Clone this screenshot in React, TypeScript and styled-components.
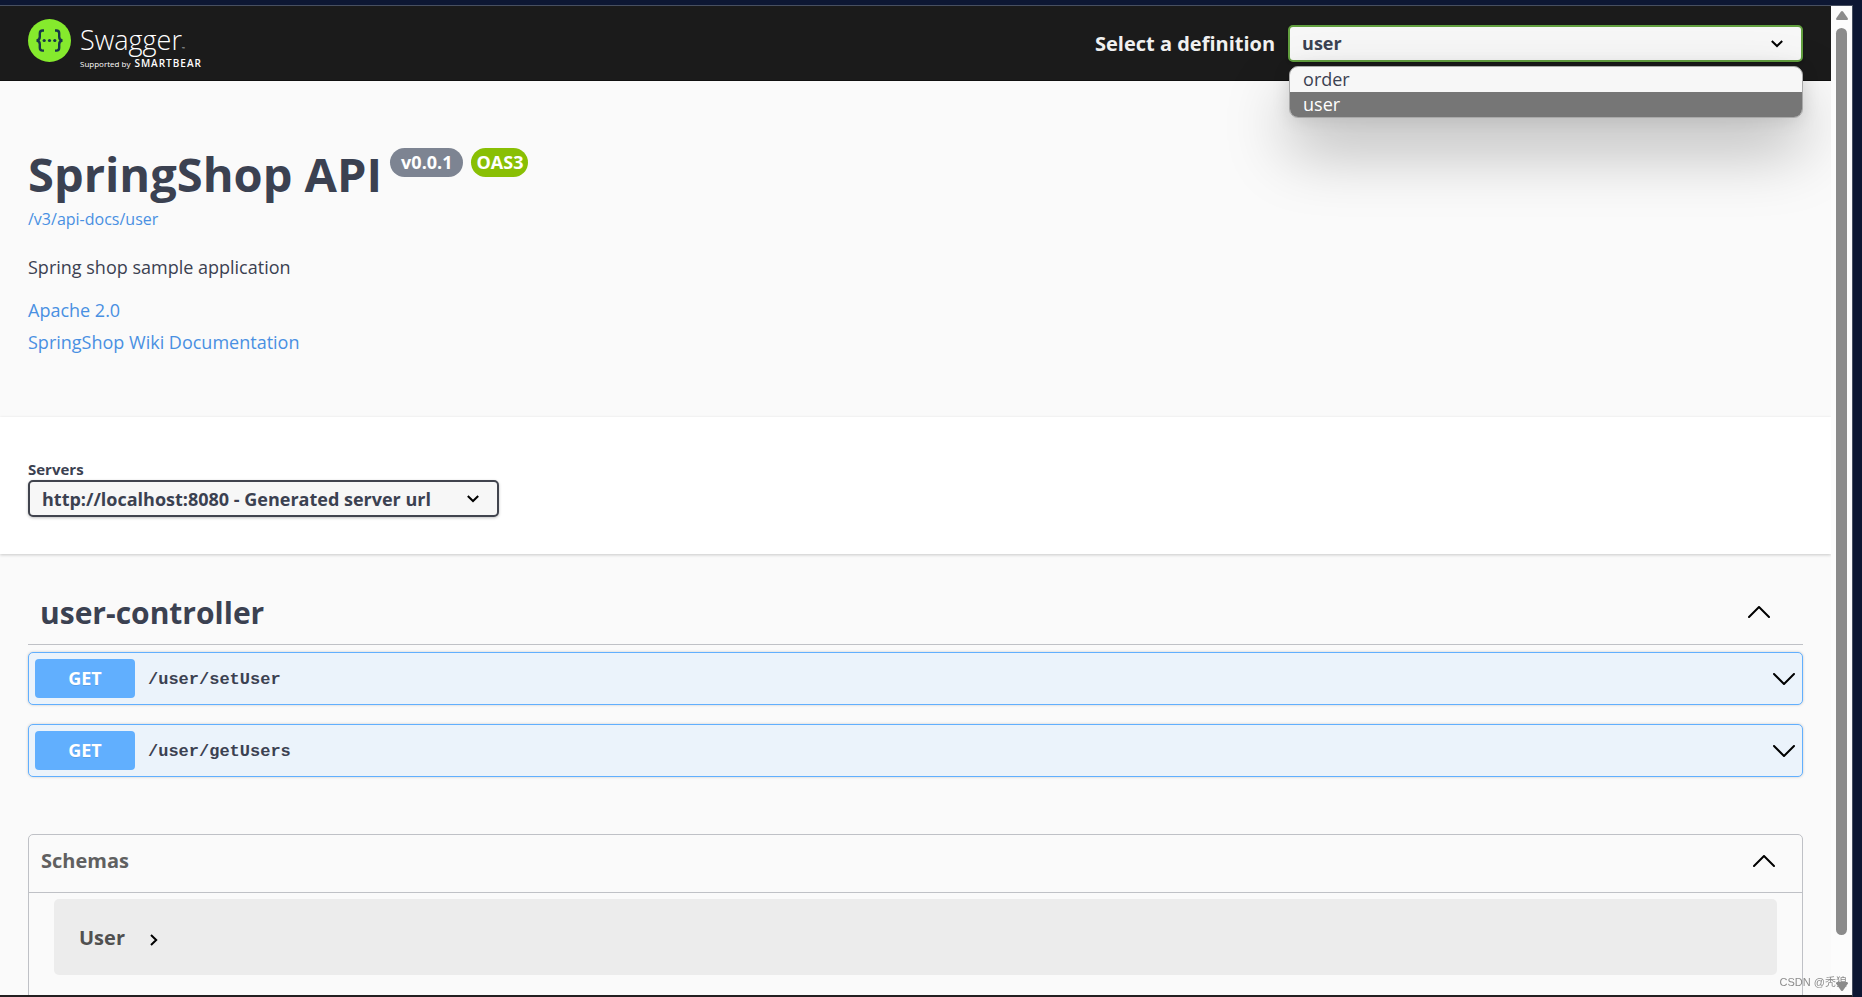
import React from "react";
import styled, { createGlobalStyle } from "styled-components";

const GlobalStyle = createGlobalStyle`
  *, *::before, *::after { box-sizing: border-box; }
  body {
    margin: 0;
    background: #0d1733;
    color: #3b4151;
    font-family: "Open Sans", "Noto Sans", "Noto Sans CJK SC", sans-serif;
    font-size: 18px;
  }
  h1, h2, h3, p, ul { margin: 0; padding: 0; }
  button, select { font: inherit; color: inherit; }
`;

const Desktop = styled.div`
  height: 100vh;
  padding: 5px 9px 0 0;
  background: #0d1733;
`;

const BrowserWindow = styled.div`
  display: flex;
  height: 100%;
  background: #fafafa;
  border: solid #474f60;
  border-width: 1px 1px 0 0;
  border-bottom: 2px solid #231f20;
`;

const Page = styled.div`
  flex: 1;
  min-width: 0;
  overflow: hidden;
`;

const TopBar = styled.header`
  display: flex;
  align-items: center;
  justify-content: space-between;
  height: 75px;
  padding: 0 28px;
  background: #1b1b1b;
  border-bottom: 1px solid #101010;
`;

const Brand = styled.a`
  display: flex;
  gap: 9px;
  height: 48px;
  color: #fff;
  text-decoration: none;
`;

const BrandText = styled.span`
  display: flex;
  flex-direction: column;
  padding-top: 5px;
`;

const BrandName = styled.span`
  font-size: 27px;
  font-weight: 300;
  line-height: 32px;

  small {
    font-size: 4px;
    line-height: 1;
  }
`;

const BrandSupport = styled.span`
  display: flex;
  align-items: baseline;
  gap: 4px;
  font-size: 8px;
  line-height: 14px;

  b {
    font-size: 10px;
    font-weight: 600;
    letter-spacing: 1px;
  }
`;

const DefinitionForm = styled.form`
  display: flex;
  align-items: center;
  gap: 13px;
  flex: 0 1 708px;
`;

const DefinitionLabel = styled.label`
  flex: none;
  color: #f0f0f0;
  font-size: 20px;
  font-weight: 700;
`;

const SelectBox = styled.div<{ $grow?: boolean }>`
  position: relative;
  flex: ${(p) => (p.$grow ? "1" : "none")};
  width: ${(p) => (p.$grow ? "auto" : "471px")};

  > svg {
    position: absolute;
    top: 15px;
    right: 20px;
    pointer-events: none;
  }
`;

const Select = styled.select<{ $active?: boolean }>`
  display: block;
  width: 100%;
  height: 37px;
  padding: 0 40px 0 12px;
  appearance: none;
  background: #f7f7f7;
  border: 2px solid ${(p) => (p.$active ? "#62a03f" : "#41444e")};
  border-radius: 5px;
  box-shadow: 0 1px 3px rgba(0, 0, 0, 0.25);
  font-size: 18px;
  font-weight: 700;
  outline: none;
`;

const OptionList = styled.ul`
  position: absolute;
  z-index: 2;
  top: 41px;
  left: 1px;
  right: 0;
  overflow: hidden;
  background: #f7f7f7;
  border: 1px solid #a9a9a9;
  border-radius: 9px;
  box-shadow: 0 32px 64px rgba(0, 0, 0, 0.28), 0 2px 18px rgba(0, 0, 0, 0.12);
  list-style: none;
`;

const Option = styled.li<{ $selected?: boolean }>`
  padding: 0 13px;
  line-height: 25px;
  color: ${(p) => (p.$selected ? "#fff" : "#3b4151")};
  background: ${(p) => (p.$selected ? "#767676" : "transparent")};
`;

const Info = styled.section`
  padding: 65px 28px 59px;
`;

const TitleRow = styled.div`
  display: flex;
  align-items: flex-start;
  gap: 8px;
`;

const Title = styled.h1`
  font-size: 47px;
  line-height: 56px;
`;

const Badge = styled.span<{ $color: string; $pad: number }>`
  margin-top: 2px;
  padding: 0 ${(p) => p.$pad}px;
  border-radius: 15px;
  background: ${(p) => p.$color};
  color: #fff;
  font-size: 18px;
  font-weight: 700;
  line-height: 29px;
`;

const Link = styled.a<{ $small?: boolean }>`
  display: block;
  width: fit-content;
  margin-top: ${(p) => (p.$small ? "5px" : "0")};
  color: #4990e2;
  font-size: ${(p) => (p.$small ? "16px" : "18px")};
  line-height: ${(p) => (p.$small ? "24px" : "32px")};
  text-decoration: none;
`;

const Description = styled.p`
  margin: 22px 0 13px;
  line-height: 28px;
`;

const Servers = styled.section`
  padding: 42px 28px 37px;
  background: #fff;
  box-shadow: 0 1px 3px rgba(0, 0, 0, 0.2);

  > label {
    display: block;
    font-size: 15px;
    font-weight: 700;
    line-height: 21px;
  }
`;

const Controller = styled.section`
  padding: 28px 28px 57px;
`;

const TagHeader = styled.div`
  display: flex;
  align-items: center;
  justify-content: space-between;
  height: 63px;
  margin-bottom: 7px;
  padding: 0 33px 2px 12px;
  border-bottom: 1px solid #bfc1c6;

  h2 {
    font-size: 30px;
  }
`;

const IconButton = styled.button`
  display: flex;
  padding: 0;
  border: 0;
  background: none;
`;

const Operations = styled.div`
  display: flex;
  flex-direction: column;
  gap: 19px;
`;

const Operation = styled.button`
  display: flex;
  align-items: center;
  gap: 13px;
  width: 100%;
  height: 53px;
  padding: 0 7px 0 6px;
  border: 1px solid #61affe;
  border-radius: 5px;
  background: #ebf3fb;
  box-shadow: 0 0 3px rgba(0, 0, 0, 0.19);
  text-align: left;

  > svg {
    margin-left: auto;
  }
`;

const Method = styled.span`
  width: 100px;
  border-radius: 4px;
  background: #61affe;
  color: #fff;
  font-size: 18px;
  font-weight: 700;
  line-height: 39px;
  text-align: center;
  text-shadow: 0 1px 0 rgba(0, 0, 0, 0.1);
`;

const Path = styled.span`
  padding-top: 2px;
  font-family: "Liberation Mono", monospace;
  font-size: 17px;
  font-weight: 700;
`;

const Schemas = styled.section`
  height: 240px;
  margin: 0 28px;
  border: 1px solid #bfc1c6;
  border-radius: 5px;
`;

const SchemasHeader = styled.div`
  display: flex;
  align-items: center;
  justify-content: space-between;
  height: 58px;
  padding: 0 27px 6px 12px;
  border-bottom: 1px solid #bfc1c6;
  color: #606060;

  h3 {
    font-size: 20px;
  }
`;

const Model = styled.button`
  display: flex;
  align-items: center;
  gap: 25px;
  width: calc(100% - 50px);
  height: 76px;
  margin: 6px 25px;
  padding: 0 25px;
  border: 0;
  border-radius: 5px;
  background: #ececec;
  color: #505050;
  font-size: 20px;
  font-weight: 700;

  > svg {
    margin-top: 5px;
  }
`;

const ScrollTrack = styled.div`
  display: flex;
  flex: none;
  flex-direction: column;
  align-items: center;
  justify-content: space-between;
  width: 21px;
  padding: 5px 0 4px;
  background: #fcfcfc;
`;

const ScrollThumb = styled.div`
  flex: 1;
  width: 11px;
  margin: 8px 0 47px;
  border-radius: 6px;
  background: #8b8b8b;
`;

const Watermark = styled.div`
  position: fixed;
  right: 15px;
  bottom: 6px;
  color: #8c8c8c;
  font-family: "Liberation Sans", "Noto Sans CJK SC", sans-serif;
  font-size: 11px;
  line-height: 18px;
`;

const SwaggerMark = () => (
  <svg width="43" height="43" viewBox="0 0 43 43" aria-hidden="true">
    <circle cx="21.5" cy="21.5" r="21.5" fill="#85ea2d" />
    <g fill="none" stroke="#173647" strokeWidth="2.4">
      <path d="M16 11.5h-1.4c-2 0-2.8 1-2.8 2.8v3.4c0 2.3-.9 3.5-3.2 3.8c2.3.3 3.2 1.5 3.2 3.8v3.4c0 1.9.8 2.9 2.8 2.9H16" />
      <path d="M27 11.5h1.4c2 0 2.8 1 2.8 2.8v3.4c0 2.3.9 3.5 3.2 3.8c-2.3.3-3.2 1.5-3.2 3.8v3.4c0 1.9-.8 2.9-2.8 2.9H27" />
    </g>
    <g fill="#173647">
      <circle cx="16.2" cy="21.5" r="1.6" />
      <circle cx="21.5" cy="21.5" r="1.6" />
      <circle cx="26.8" cy="21.5" r="1.6" />
    </g>
  </svg>
);

const SelectArrow = () => (
  <svg width="12" height="8" viewBox="0 0 12 8" fill="none" stroke="#000" strokeWidth="2" aria-hidden="true">
    <path d="M.8 1L6 6L11.2 1" />
  </svg>
);

const Chevron = ({ up = false }: { up?: boolean }) => (
  <svg width="22" height="12" viewBox="0 0 22 12" fill="none" stroke="#000" strokeWidth="2" strokeLinecap="round" strokeLinejoin="round" aria-hidden="true">
    <path d={up ? "M1 11L11 1L21 11" : "M1 1L11 11L21 1"} />
  </svg>
);

const ModelArrow = () => (
  <svg width="8" height="12" viewBox="0 0 8 12" fill="none" stroke="#000" strokeWidth="2" aria-hidden="true">
    <path d="M1 1L6.2 6L1 11" />
  </svg>
);

const ScrollArrow = ({ down = false }: { down?: boolean }) => (
  <svg width="12" height="9" viewBox="0 0 12 9" fill="#8b8b8b" aria-hidden="true">
    <path d={down ? "M0 1.5Q0 0 1 0H11Q12 0 12 1.5L7 8.5Q6 9.5 5 8.5Z" : "M0 7.5L5 .5Q6-.5 7 .5L12 7.5Q12 9 11 9H1Q0 9 0 7.5Z"} />
  </svg>
);

const definitions = ["order", "user"];
const operations = ["/user/setUser", "/user/getUsers"];

export default function App() {
  const [definition, setDefinition] = React.useState("user");

  return (
    <>
      <GlobalStyle />
      <Desktop>
        <BrowserWindow>
          <Page>
            <TopBar>
              <Brand href="#">
                <SwaggerMark />
                <BrandText>
                  <BrandName>
                    Swagger<small>™</small>
                  </BrandName>
                  <BrandSupport>
                    Supported by <b>SMARTBEAR</b>
                  </BrandSupport>
                </BrandText>
              </Brand>
              <DefinitionForm>
                <DefinitionLabel htmlFor="definition">Select a definition</DefinitionLabel>
                <SelectBox $grow>
                  <Select
                    id="definition"
                    $active
                    value={definition}
                    onChange={(e) => setDefinition(e.target.value)}
                  >
                    {definitions.map((name) => (
                      <option key={name}>{name}</option>
                    ))}
                  </Select>
                  <SelectArrow />
                  <OptionList role="listbox" aria-label="Definitions">
                    {definitions.map((name) => (
                      <Option
                        key={name}
                        role="option"
                        aria-selected={name === definition}
                        $selected={name === definition}
                        onClick={() => setDefinition(name)}
                      >
                        {name}
                      </Option>
                    ))}
                  </OptionList>
                </SelectBox>
              </DefinitionForm>
            </TopBar>

            <Info>
              <TitleRow>
                <Title>SpringShop API</Title>
                <Badge $color="#7d8492" $pad={11}>v0.0.1</Badge>
                <Badge $color="#89bf04" $pad={5}>OAS3</Badge>
              </TitleRow>
              <Link $small href="#api-docs">/v3/api-docs/user</Link>
              <Description>Spring shop sample application</Description>
              <Link href="#license">Apache 2.0</Link>
              <Link href="#wiki">SpringShop Wiki Documentation</Link>
            </Info>

            <Servers>
              <label htmlFor="server">Servers</label>
              <SelectBox>
                <Select id="server">
                  <option>http://localhost:8080 - Generated server url</option>
                </Select>
                <SelectArrow />
              </SelectBox>
            </Servers>

            <Controller>
              <TagHeader>
                <h2>user-controller</h2>
                <IconButton aria-label="Collapse user-controller">
                  <Chevron up />
                </IconButton>
              </TagHeader>
              <Operations>
                {operations.map((path) => (
                  <Operation key={path}>
                    <Method>GET</Method>
                    <Path>{path}</Path>
                    <Chevron />
                  </Operation>
                ))}
              </Operations>
            </Controller>

            <Schemas>
              <SchemasHeader>
                <h3>Schemas</h3>
                <IconButton aria-label="Collapse schemas">
                  <Chevron up />
                </IconButton>
              </SchemasHeader>
              <Model>
                User
                <ModelArrow />
              </Model>
            </Schemas>
          </Page>
          <ScrollTrack>
            <ScrollArrow />
            <ScrollThumb />
            <ScrollArrow down />
          </ScrollTrack>
        </BrowserWindow>
      </Desktop>
      <Watermark>CSDN @秃狼</Watermark>
    </>
  );
}
